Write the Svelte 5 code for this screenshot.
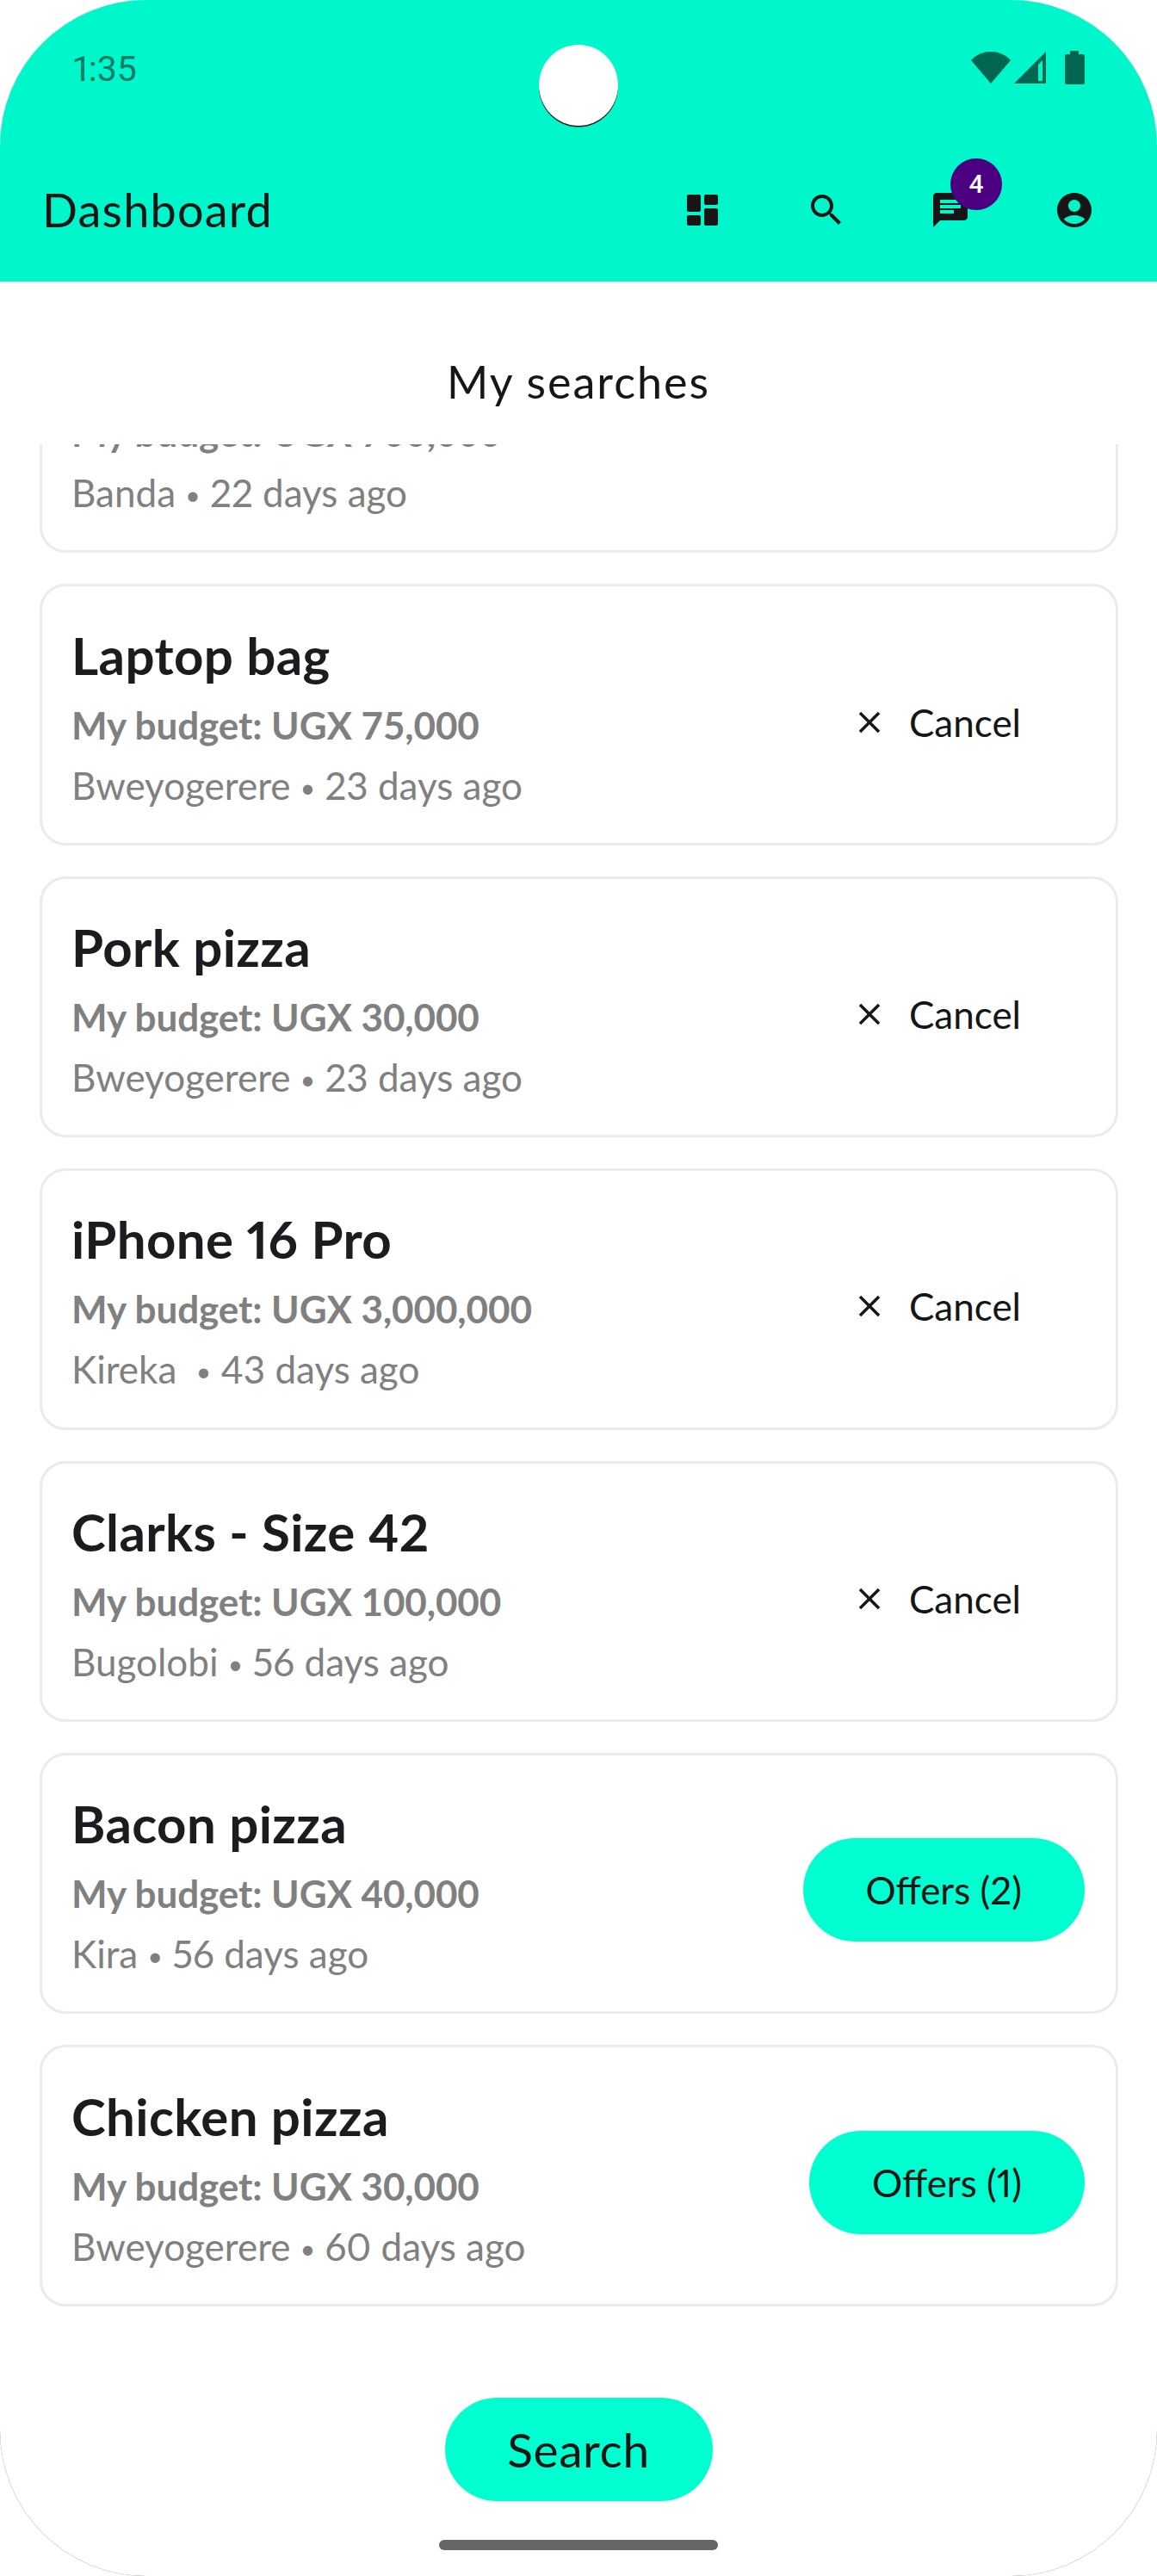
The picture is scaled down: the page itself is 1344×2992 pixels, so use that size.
<script>
  const searches = [
    { title: "", budget: "UGX 700,000", place: "Banda", age: "22 days ago", hidden: true },
    { title: "Laptop bag", budget: "UGX 75,000", place: "Bweyogerere", age: "23 days ago" },
    { title: "Pork pizza", budget: "UGX 30,000", place: "Bweyogerere", age: "23 days ago" },
    { title: "iPhone 16 Pro", budget: "UGX 3,000,000", place: "Kireka\u00a0", age: "43 days ago" },
    { title: "Clarks - Size 42", budget: "UGX 100,000", place: "Bugolobi", age: "56 days ago" },
    { title: "Bacon pizza", budget: "UGX 40,000", place: "Kira", age: "56 days ago", offers: 2 },
    { title: "Chicken pizza", budget: "UGX 30,000", place: "Bweyogerere", age: "60 days ago", offers: 1 }
  ];
</script>

<div class="screen">
  <header class="header">
    <div class="status">
      <span class="time">1:35</span>
      <div class="status-icons">
        <svg class="wifi" width="46" height="37" viewBox="0 0 46 37"><path d="M0 10C12-3.3 34-3.3 46 10L23 37z" /></svg>
        <svg class="signal" width="37" height="37" viewBox="0 0 37 37"><path fill-rule="evenodd" d="M37 0V37H0zM28 15V34H33V10z" /></svg>
        <svg class="battery" width="23" height="39" viewBox="0 0 23 39"><path d="M6 0H16V4H21Q23 4 23 6V37Q23 39 21 39H2Q0 39 0 37V6Q0 4 2 4H6z" /></svg>
      </div>
    </div>
    <div class="toolbar">
      <h1>Dashboard</h1>
      <nav class="actions">
        <span class="action">
          <svg viewBox="0 0 24 24"><path d="M4 13h6c.55 0 1-.45 1-1V4c0-.55-.45-1-1-1H4c-.55 0-1 .45-1 1v8c0 .55.45 1 1 1zm0 8h6c.55 0 1-.45 1-1v-4c0-.55-.45-1-1-1H4c-.55 0-1 .45-1 1v4c0 .55.45 1 1 1zm10 0h6c.55 0 1-.45 1-1v-8c0-.55-.45-1-1-1h-6c-.55 0-1 .45-1 1v8c0 .55.45 1 1 1zM13 4v4c0 .55.45 1 1 1h6c.55 0 1-.45 1-1V4c0-.55-.45-1-1-1h-6c-.55 0-1 .45-1 1z" /></svg>
        </span>
        <span class="action">
          <svg viewBox="0 0 24 24"><path d="M15.5 14h-.79l-.28-.27C15.41 12.59 16 11.11 16 9.5 16 5.91 13.09 3 9.5 3S3 5.91 3 9.5 5.91 16 9.5 16c1.61 0 3.09-.59 4.23-1.57l.27.28v.79l5 4.99L20.49 19l-4.99-5zm-6 0C7.01 14 5 11.99 5 9.5S7.01 5 9.5 5 14 7.01 14 9.5 11.99 14 9.5 14z" /></svg>
        </span>
        <span class="action">
          <svg viewBox="0 0 24 24"><path d="M20 2H4c-1.1 0-1.99.9-1.99 2L2 22l4-4h14c1.1 0 2-.9 2-2V4c0-1.1-.9-2-2-2zM6 9h12v2H6V9zm8 5H6v-2h8v2zm4-6H6V6h12v2z" /></svg>
          <span class="badge">4</span>
        </span>
        <span class="action">
          <svg viewBox="0 0 24 24"><path d="M12 2C6.48 2 2 6.48 2 12s4.48 10 10 10 10-4.48 10-10S17.52 2 12 2zm0 4c1.93 0 3.5 1.57 3.5 3.5S13.93 13 12 13s-3.5-1.57-3.5-3.5S10.07 6 12 6zm0 14c-2.03 0-4.43-.82-6.14-2.88C7.55 15.8 9.68 15 12 15s4.45.8 6.14 2.12C16.43 19.18 14.03 20 12 20z" /></svg>
        </span>
      </nav>
    </div>
    <div class="camera"></div>
  </header>

  <h2 class="page-title">My searches</h2>

  <div class="list">
    <div class="list-inner">
      {#each searches as s}
        <article class="card">
          <div class="info">
            <div class="title">{s.title || "\u00a0"}</div>
            <div class="budget">My budget: {s.budget}</div>
            <div class="meta">{s.place} <span class="dot">•</span> {s.age}</div>
          </div>
          {#if s.offers}
            <button class="pill offers">Offers ({s.offers})</button>
          {:else if !s.hidden}
            <button class="cancel">
              <svg viewBox="0 0 24 24"><path d="M19 6.41 17.59 5 12 10.59 6.41 5 5 6.41 10.59 12 5 17.59 6.41 19 12 13.41 17.59 19 19 17.59 13.41 12z" /></svg>
              Cancel
            </button>
          {/if}
        </article>
      {/each}
    </div>
  </div>

  <footer class="footer">
    <button class="pill search">Search</button>
    <div class="home-bar"></div>
  </footer>
</div>

<style>
  :global(body) {
    background: #fff;
  }

  .screen {
    width: 1344px;
    height: 2992px;
    display: flex;
    flex-direction: column;
    overflow: hidden;
    background: #fff;
    border-radius: 170px;
    box-shadow: 0 0 1px rgba(0, 0, 0, 0.6);
    font-family: Lato, sans-serif;
    font-variant-numeric: proportional-nums;
    color: #1c1b1f;
  }

  .header {
    position: relative;
    flex: none;
    height: 327px;
    background: #00f6cb;
  }

  .status {
    height: 160px;
    display: flex;
    align-items: center;
    justify-content: space-between;
    padding: 0 84px 0 85px;
    box-sizing: border-box;
  }

  .time {
    font-family: Roboto, sans-serif;
    font-size: 41px;
    font-weight: 400;
    color: #007a62;
  }

  .status-icons {
    display: flex;
    align-items: center;
    fill: #00664f;
    margin-top: -3px;
  }

  .signal {
    margin-left: 4px;
  }

  .battery {
    margin-left: 22px;
  }

  .toolbar {
    height: 167px;
    display: flex;
    align-items: center;
    justify-content: space-between;
    padding: 0 24px 0 49px;
  }

  h1 {
    margin: 0;
    font-size: 54px;
    font-weight: 400;
    letter-spacing: 1.2px;
    line-height: 64px;
    color: #161616;
  }

  .actions {
    display: flex;
  }

  .action {
    position: relative;
    width: 144px;
    height: 48px;
    display: flex;
    justify-content: center;
    fill: #161616;
  }

  .action svg {
    width: 48px;
    height: 48px;
  }

  .badge {
    position: absolute;
    left: 72px;
    top: -36px;
    width: 60px;
    height: 60px;
    border-radius: 50%;
    background: #4b0082;
    color: #fff;
    font-family: Roboto, sans-serif;
    font-size: 30px;
    font-weight: 500;
    line-height: 60px;
    text-align: center;
  }

  .camera {
    position: absolute;
    left: 626px;
    top: 52px;
    width: 92px;
    height: 94px;
    border-radius: 50%;
    background: #fff;
    box-shadow: 0 1.5px 0 #111;
  }

  .page-title {
    flex: none;
    height: 189px;
    margin: 0;
    padding-top: 86px;
    box-sizing: border-box;
    font-size: 52px;
    font-weight: 400;
    letter-spacing: 2px;
    line-height: 60px;
    text-align: center;
    color: #161616;
  }

  .list {
    flex: 1;
    min-height: 0;
    overflow: hidden;
  }

  .list-inner {
    display: flex;
    flex-direction: column;
    gap: 36px;
    margin-top: -177px;
    padding: 0 45px 0 46px;
  }

  .card {
    flex: none;
    height: 303.4px;
    box-sizing: border-box;
    display: flex;
    align-items: center;
    justify-content: space-between;
    padding: 0 36px;
    border: 3px solid #ebebeb;
    border-radius: 30px;
  }

  .info {
    margin-left: -2px;
    padding-top: 3px;
  }

  .title {
    font-size: 60px;
    font-weight: 700;
    letter-spacing: 0.4px;
    line-height: 92px;
    color: #1c1b1f;
  }

  .budget {
    font-size: 44px;
    font-weight: 700;
    font-variant-numeric: tabular-nums;
    letter-spacing: -0.1px;
    line-height: 70px;
    color: #808080;
  }

  .meta {
    font-size: 44px;
    line-height: 70px;
    color: #808080;
  }

  .dot {
    font-size: 30px;
    vertical-align: 3px;
  }

  button {
    border: none;
    background: none;
    padding: 0;
    font-family: inherit;
    font-variant-numeric: inherit;
    color: #161616;
  }

  .cancel {
    display: flex;
    align-items: center;
    gap: 25px;
    margin-top: 17px;
    margin-right: 74px;
    font-size: 44px;
    fill: #161616;
  }

  .cancel svg {
    width: 42px;
    height: 42px;
  }

  .pill {
    height: 120px;
    border-radius: 60px;
    background: #00ffd0;
    padding: 0 73px;
  }

  .offers {
    margin-top: 15px;
    font-size: 44px;
    white-space: nowrap;
  }

  .footer {
    flex: none;
    height: 300px;
    display: flex;
    flex-direction: column;
    align-items: center;
    box-sizing: border-box;
    padding-top: 93px;
  }

  .search {
    flex: none;
    font-size: 55px;
    letter-spacing: 0.6px;
    width: 311px;
    padding: 0;
  }

  .home-bar {
    flex: none;
    width: 324px;
    height: 12px;
    margin-top: 45px;
    border-radius: 6px;
    background: #666;
  }
</style>
